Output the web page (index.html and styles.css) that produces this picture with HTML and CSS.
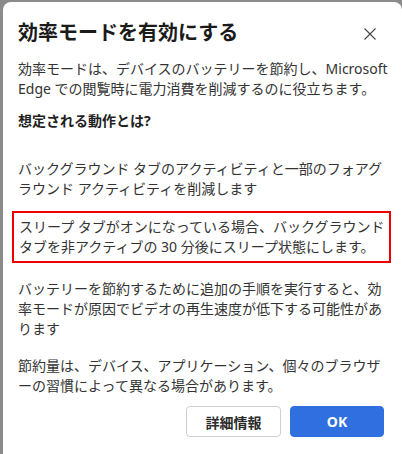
FILE: index.html
```html
<!DOCTYPE html>
<html lang="ja">
<head>
<meta charset="utf-8">
<link rel="stylesheet" href="styles.css">
</head>
<body>
<div class="dialog">
  <div class="header">
    <h1 class="title">効率モードを有効にする</h1>
    <button class="close" aria-label="閉じる">
      <svg width="12" height="12" viewBox="0 0 12 12"><path d="M0.5 0.5 L11.5 11.5 M11.5 0.5 L0.5 11.5" stroke="#444" stroke-width="1.1" fill="none"/></svg>
    </button>
  </div>
  <p class="p1">効率モードは、デバイスのバッテリーを節約し、Microsoft Edge での閲覧時に電力消費を削減するのに役立ちます。</p>
  <p class="heading">想定される動作とは?</p>
  <p class="p3">バックグラウンド タブのアクティビティと一部のフォアグラウンド アクティビティを削減します</p>
  <p class="highlight">スリープ タブがオンになっている場合、バックグラウンド タブを非アクティブの 30 分後にスリープ状態にします。</p>
  <p class="p4">バッテリーを節約するために追加の手順を実行すると、効率モードが原因でビデオの再生速度が低下する可能性があります</p>
  <p class="p5">節約量は、デバイス、アプリケーション、個々のブラウザーの習慣によって異なる場合があります。</p>
  <div class="actions">
    <button class="btn btn-secondary">詳細情報</button>
    <button class="btn btn-primary">OK</button>
  </div>
</div>
</body>
</html>
```
FILE: styles.css
```css
html, body {
  margin: 0;
  padding: 0;
  background: #8b8b8b;
  height: 454px;
  overflow: hidden;
}
body {
  font-family: "Noto Sans", "Noto Sans CJK JP", sans-serif;
  line-break: loose;
}
.dialog {
  margin: 2px 0 0 3px;
  width: 399px;
  height: 460px;
  box-sizing: border-box;
  background: #fff;
  border-radius: 8px;
  padding: 17px 14px 0 15px;
  color: #333;
}
.header {
  display: flex;
  align-items: center;
  justify-content: space-between;
  height: 28px;
}
.title {
  margin: 0;
  font-size: 20px;
  line-height: 28px;
  font-weight: 700;
  color: #1b1b1b;
}
.close {
  border: 0;
  background: none;
  padding: 0;
  margin: 2px 12px 0 0;
  width: 12px;
  height: 12px;
  display: flex;
}
p {
  margin: 0;
  font-size: 14px;
  line-height: 20px;
}
.p1 { margin-top: 12px; }
.heading { margin-top: 12px; font-weight: 700; color: #1f1f1f; }
.p3 { margin-top: 28px; }
.highlight {
  margin: 12px -3px 0 -6px;
  border: 2px solid #ee0000;
  padding: 4px 0 4px 5px;
}
.p4 { margin-top: 16px; }
.p5 { margin-top: 17px; }
.actions {
  display: flex;
  justify-content: flex-end;
  gap: 9px;
  margin-top: 10px;
  padding-right: 4px;
}
.btn {
  height: 31px;
  border-radius: 4px;
  font-family: "Noto Sans", "Noto Sans CJK JP", sans-serif;
  font-size: 14px;
  font-weight: 700;
  padding: 0;
  box-sizing: border-box;
}
.btn-secondary {
  width: 95px;
  background: #fff;
  border: 1px solid #cfcfcf;
  color: #2b2b2b;
}
.btn-primary {
  width: 94px;
  background: #2f6fdf;
  border: 1px solid #2f6fdf;
  color: #fff;
}
```
